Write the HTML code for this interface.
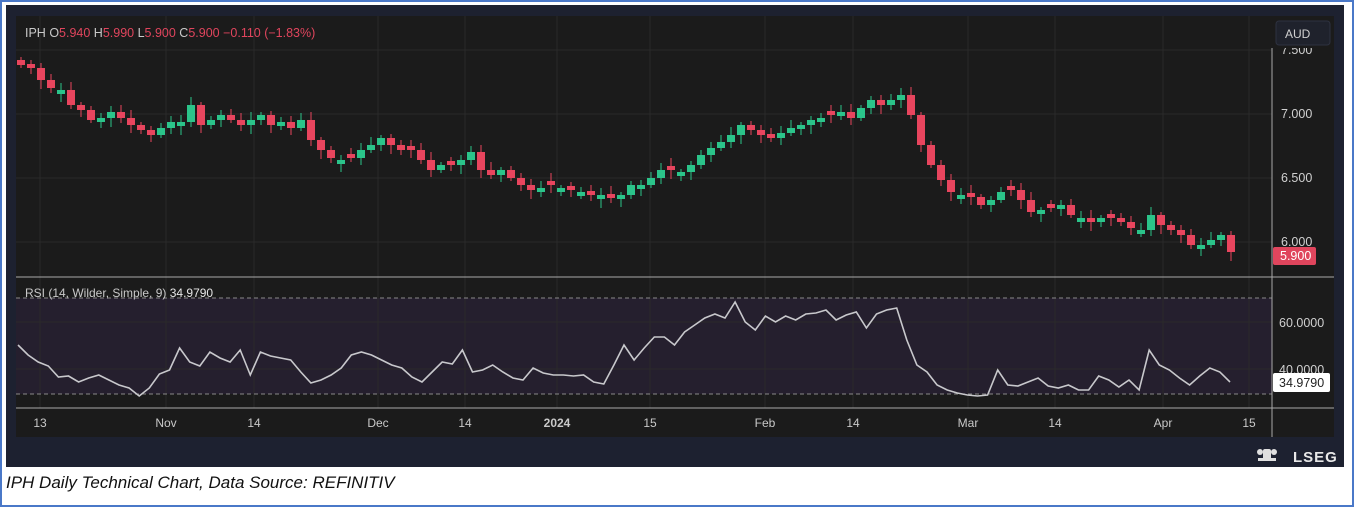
<!DOCTYPE html>
<html><head><meta charset="utf-8"><style>
html,body{margin:0;padding:0;background:#fff;width:1354px;height:507px;overflow:hidden;font-family:"Liberation Sans",sans-serif}
.outer{position:absolute;left:0;top:0;width:1350px;height:503px;border:2px solid #4a78c8}
.frame{position:absolute;left:6px;top:5px;width:1338px;height:462px;background:#1d2130}
.cap{position:absolute;left:6px;top:473px;font-style:italic;font-size:17px;color:#111}
svg text{font-family:"Liberation Sans",sans-serif}
</style></head><body>
<div class="outer"></div>
<div class="frame"></div>
<svg id="s" width="1354" height="507" style="position:absolute;left:0;top:0">
<rect x="16" y="16" width="1318" height="421" fill="#1b1b1b"/>
<rect x="16" y="298" width="1256" height="96" fill="#251f2e"/>
<g stroke="#2a2a2a" stroke-width="1">
<line x1="16" y1="50" x2="1272" y2="50"/><line x1="16" y1="114" x2="1272" y2="114"/><line x1="16" y1="178" x2="1272" y2="178"/><line x1="16" y1="242" x2="1272" y2="242"/>
<line x1="16" y1="322" x2="1272" y2="322"/><line x1="16" y1="369" x2="1272" y2="369"/>
<line x1="40" y1="16" x2="40" y2="408"/><line x1="166" y1="16" x2="166" y2="408"/><line x1="254" y1="16" x2="254" y2="408"/><line x1="378" y1="16" x2="378" y2="408"/><line x1="465" y1="16" x2="465" y2="408"/><line x1="557" y1="16" x2="557" y2="408"/><line x1="650" y1="16" x2="650" y2="408"/><line x1="765" y1="16" x2="765" y2="408"/><line x1="853" y1="16" x2="853" y2="408"/><line x1="968" y1="16" x2="968" y2="408"/><line x1="1055" y1="16" x2="1055" y2="408"/><line x1="1163" y1="16" x2="1163" y2="408"/><line x1="1249" y1="16" x2="1249" y2="408"/>
</g>
<g stroke="#8a8a8a" stroke-dasharray="4,3"><line x1="16" y1="298" x2="1272" y2="298"/><line x1="16" y1="394" x2="1272" y2="394"/></g>
<g stroke="#aaa" stroke-width="1"><line x1="16" y1="277" x2="1334" y2="277"/><line x1="16" y1="408" x2="1334" y2="408"/><line x1="1272" y1="48" x2="1272" y2="437"/></g>
<g id="c"></g>
<polyline id="r" fill="none" stroke="#c8c8cc" stroke-width="1.6"/>
<text x="25" y="37" font-size="12.5" fill="#c9c9c9">IPH <tspan>O</tspan><tspan fill="#e0455d">5.940</tspan> H<tspan fill="#e0455d">5.990</tspan> L<tspan fill="#e0455d">5.900</tspan> C<tspan fill="#e0455d">5.900</tspan> <tspan fill="#e0455d">−0.110 (−1.83%)</tspan></text>
<svg x="1272" y="48" width="62" height="20"><text x="9" y="6" font-size="12.5" fill="#d0d0d0">7.500</text></svg>
<rect x="1276" y="21" width="54" height="24" rx="3" fill="#1f222c" stroke="#2e3240"/>
<text x="1285" y="38" font-size="12" fill="#d0d0d0">AUD</text>
<g font-size="12.5" fill="#d0d0d0">
<text x="1281" y="118">7.000</text><text x="1281" y="182">6.500</text><text x="1281" y="246">6.000</text>
<text x="1279" y="327">60.0000</text><text x="1279" y="374">40.0000</text>
</g>
<rect x="1273" y="247" width="43" height="18" rx="2" fill="#e0455d"/><text x="1280" y="260" font-size="12.5" fill="#fff">5.900</text>
<rect x="1273" y="373" width="57" height="19" rx="2" fill="#fff"/><text x="1279" y="387" font-size="12.5" fill="#222">34.9790</text>
<text x="25" y="297" font-size="12" fill="#c9c9c9">RSI (14, Wilder, Simple, 9) <tspan fill="#e6e6e6">34.9790</tspan></text>
<g font-size="12" fill="#c9c9c9" text-anchor="middle">
<text x="40" y="427">13</text><text x="166" y="427">Nov</text><text x="254" y="427">14</text><text x="378" y="427">Dec</text><text x="465" y="427">14</text><text x="557" y="427" font-weight="bold">2024</text><text x="650" y="427">15</text><text x="765" y="427">Feb</text><text x="853" y="427">14</text><text x="968" y="427">Mar</text><text x="1055" y="427">14</text><text x="1163" y="427">Apr</text><text x="1249" y="427">15</text>
</g>
<text x="1293" y="462" font-size="15" font-weight="bold" fill="#e8e8e8" letter-spacing="1">LSEG</text>
<g fill="#e0e0e0"><rect x="1263" y="449" width="8" height="11" rx="2"/><circle cx="1260" cy="452" r="3"/><circle cx="1274" cy="452" r="3"/><rect x="1258" y="458" width="18" height="3"/></g>
</svg>
<div class="cap">IPH Daily Technical Chart, Data Source: REFINITIV</div>
<script>
var Y=[65,68,80,88,90,105,110,120,118,112,118,125,130,135,128,122,122,105,125,120,115,120,125,120,115,125,122,128,120,140,150,158,160,158,150,145,138,145,150,150,160,170,165,165,160,152,170,175,170,178,185,190,188,185,188,190,192,195,195,198,195,185,185,178,170,170,172,165,155,148,142,135,125,130,135,138,133,128,125,120,118,115,112,118,108,100,105,100,95,115,145,165,180,192,195,197,205,200,192,190,200,212,210,208,205,215,218,222,218,218,222,228,230,215,225,230,235,245,245,240,235,252];
var R=[345,355,362,366,377,376,382,378,375,380,385,388,396,388,374,370,348,362,366,352,358,362,350,375,352,356,358,360,372,383,380,375,368,355,352,355,360,365,368,377,382,372,362,364,350,372,370,365,372,378,380,368,373,375,375,376,375,382,384,365,345,360,348,337,337,345,332,325,318,314,318,302,322,330,316,322,316,320,314,313,310,320,315,312,328,314,310,308,340,365,372,385,390,393,395,396,395,370,385,386,382,378,386,388,385,390,390,376,380,387,380,390,350,365,370,378,385,376,368,372,382];
var g=document.getElementById('c'),h='';
for(var i=0;i<Y.length;i++){var x=21+i*10,o=i?Y[i-1]:60,c=Y[i];if(Math.abs(o-c)<4){o=c+(i%2?-4:4);}
var up=c<o,col=up?'#2bc48a':'#e8455e',t=Math.min(o,c),b=Math.max(o,c);
var wt=t-3-(i*7%6),wb=b+3+(i*3%7);
h+='<line x1="'+x+'" y1="'+wt+'" x2="'+x+'" y2="'+wb+'" stroke="'+col+'"/><rect x="'+(x-4)+'" y="'+t+'" width="8" height="'+(b-t)+'" fill="'+col+'"/>';}
g.innerHTML=h;
var pts=[],st=(1230-18)/(R.length-1);for(var i=0;i<R.length;i++)pts.push((18+i*st).toFixed(1)+','+R[i]);
document.getElementById('r').setAttribute('points',pts.join(' '));
</script>
</body></html>
